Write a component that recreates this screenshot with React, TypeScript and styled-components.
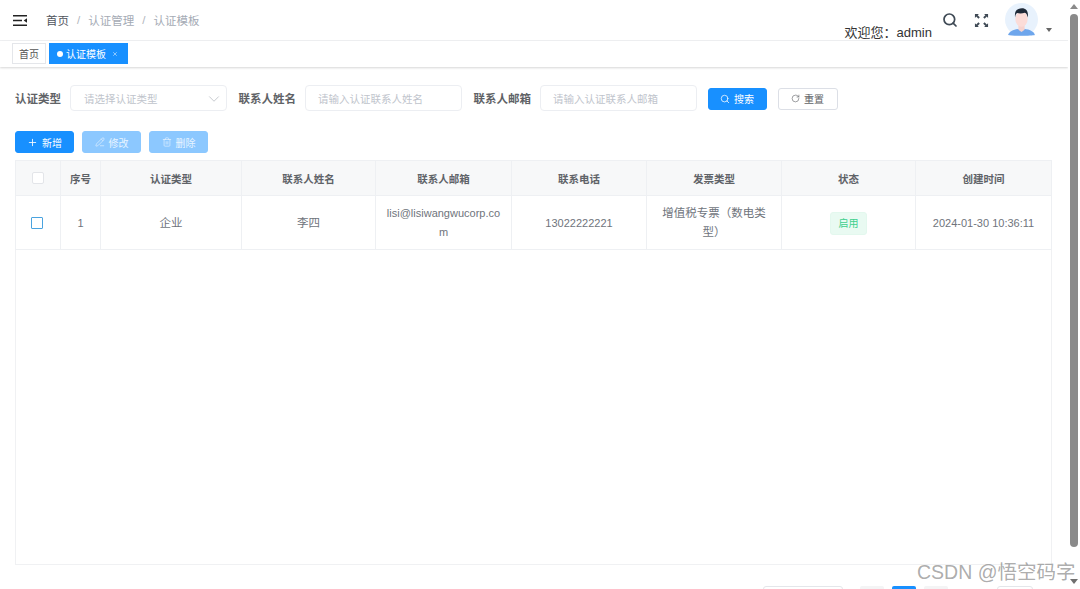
import React from 'react';
import styled, { createGlobalStyle } from 'styled-components';
import { Plus, Search, RotateCw, PencilLine, Trash2, ChevronDown, X } from 'lucide-react';

const GlobalStyle = createGlobalStyle`
  html, body {
    margin: 0;
    padding: 0;
    height: 100%;
    overflow: hidden;
    background: #fff;
    font-family: "Liberation Sans", "Noto Sans CJK SC", sans-serif;
  }
  * { box-sizing: border-box; }
`;

const columns = [45, 40, 141, 134, 136, 135, 135, 134, 136];
const headers = ['序号', '认证类型', '联系人姓名', '联系人邮箱', '联系电话', '发票类型', '状态', '创建时间'];

const App: React.FC = () => {
  return (
    <Page>
      <GlobalStyle />
      <Main>
        <Navbar>
          <FoldIcon viewBox="0 0 14 11">
            <path d="M0 .8h14M0 5.500h9M0 10.200h14" stroke="#222" strokeWidth="1.6" />
            <path d="M14 3.200v4.600L10.600 5.500z" fill="#222" />
          </FoldIcon>
          <Crumbs>
            <CrumbRoot>首页</CrumbRoot>
            <Slash>/</Slash>
            <span>认证管理</span>
            <Slash>/</Slash>
            <span>认证模板</span>
          </Crumbs>
          <RightMenu>
            <Welcome>欢迎您：admin</Welcome>
            <SearchIcon size={16} strokeWidth={2.6} />
            <FullIcon viewBox="0 0 16 16">
              <path
                d="M1 1h4.200L3.900 2.300l2.300 2.300-1.500 1.500-2.300-2.300L1 5.200zM15 1v4.200l-1.400-1.400-2.300 2.300-1.500-1.500 2.300-2.300L10.800 1zM1 15v-4.200l1.400 1.400 2.300-2.300 1.500 1.500-2.300 2.300L5.200 15zM15 15h-4.200l1.300-1.300-2.300-2.300 1.500-1.500 2.300 2.300 1.400-1.400z"
                fill="#3f4a55"
              />
            </FullIcon>
            <Avatar viewBox="0 0 32 32">
              <circle cx="16" cy="16" r="16" fill="#e8f2fd" />
              <path d="M3 31c1-4 7-6 13-6s12 2 13 6c-3 1-23 1-26 0z" fill="#6ea6ec" />
              <path d="M13 21h6v5l-3 2-3-2z" fill="#f6d3cf" />
              <ellipse cx="16" cy="15.500" rx="6" ry="7.500" fill="#fbdcd8" />
              <path d="M9.800 14c-1-6 2-9 6.700-9 4 0 6.400 2.700 5.700 9-.7-2.500-1.500-4-3-4.500-2.500.8-5.500.8-7.500.2-1.200.8-1.700 2.300-1.900 4.300z" fill="#1f2a38" />
            </Avatar>
            <Caret />
          </RightMenu>
        </Navbar>
        <TagsBar>
          <Tag>首页</Tag>
          <Tag $active>
            <Dot />
            认证模板
            <CloseIcon size={6} strokeWidth={2} />
          </Tag>
        </TagsBar>
        <Content>
          <SearchForm>
            <FieldLabel>认证类型</FieldLabel>
            <Select>
              请选择认证类型
              <SelectArrow size={18} strokeWidth={1} />
            </Select>
            <FieldLabel>联系人姓名</FieldLabel>
            <Input>请输入认证联系人姓名</Input>
            <FieldLabel>联系人邮箱</FieldLabel>
            <Input>请输入认证联系人邮箱</Input>
            <ActionButton $kind="primary" $width={59}>
              <Search size={10} strokeWidth={1.8} />
              搜索
            </ActionButton>
            <ActionButton $kind="plain" $width={60}>
              <RotateCw size={9} strokeWidth={1.6} />
              重置
            </ActionButton>
          </SearchForm>
          <Toolbar>
            <ActionButton $kind="primary" $width={59}>
              <Plus size={11} strokeWidth={1.8} />
              新增
            </ActionButton>
            <ActionButton $kind="disabled" $width={59}>
              <PencilLine size={10} strokeWidth={1.5} />
              修改
            </ActionButton>
            <ActionButton $kind="disabled" $width={59}>
              <Trash2 size={10} strokeWidth={1.5} />
              删除
            </ActionButton>
          </Toolbar>
          <TableWrap>
            <Table>
              <colgroup>
                {columns.map((w, i) => (
                  <col key={i} style={{ width: w }} />
                ))}
              </colgroup>
              <thead>
                <tr>
                  <HeadCell>
                    <HeadCheck />
                  </HeadCell>
                  {headers.map((h) => (
                    <HeadCell key={h}>{h}</HeadCell>
                  ))}
                </tr>
              </thead>
              <tbody>
                <tr>
                  <BodyCell>
                    <RowCheck />
                  </BodyCell>
                  <BodyCell $latin>1</BodyCell>
                  <BodyCell>企业</BodyCell>
                  <BodyCell>李四</BodyCell>
                  <BodyCell $latin>lisi@lisiwangwucorp.com</BodyCell>
                  <BodyCell $latin>13022222221</BodyCell>
                  <BodyCell>增值税专票（数电类型）</BodyCell>
                  <BodyCell>
                    <StatusTag>启用</StatusTag>
                  </BodyCell>
                  <BodyCell $latin>2024-01-30 10:36:11</BodyCell>
                </tr>
              </tbody>
            </Table>
          </TableWrap>
          <Pagination>
            <PageSize />
            <PageButton />
            <PageButton $active />
            <PageButton />
            <GoTo />
          </Pagination>
        </Content>
      </Main>
      <Scrollbar>
        <ArrowUp />
        <Thumb />
        <ArrowDown />
      </Scrollbar>
      <Watermark>CSDN @悟空码字</Watermark>
    </Page>
  );
};

const Page = styled.div`
  position: relative;
  display: flex;
  width: 1080px;
  height: 589px;
  overflow: hidden;
  background: #fff;
`;

const Main = styled.div`
  width: 1068px;
  flex: none;
  display: flex;
  flex-direction: column;
`;

const Navbar = styled.div`
  height: 41px;
  flex: none;
  display: flex;
  align-items: center;
  padding: 0 16px 0 13px;
  border-bottom: 1px solid #f0f1f3;
`;

const FoldIcon = styled.svg`
  width: 14px;
  height: 11px;
  flex: none;
  margin-right: 19px;
`;

const Crumbs = styled.div`
  display: flex;
  align-items: center;
  font-size: 11.5px;
  color: #a5abb5;
`;

const CrumbRoot = styled.span`
  color: #50555c;
`;

const Slash = styled.span`
  margin: 0 8px;
  color: #b0b4bb;
`;

const RightMenu = styled.div`
  margin-left: auto;
  display: flex;
  align-items: flex-start;
  height: 41px;
  padding-top: 3px;
`;

const Welcome = styled.span`
  margin: 21px 10px 0 0;
  font-size: 13px;
  line-height: 18px;
  color: #333;
  white-space: nowrap;
`;

const SearchIcon = styled(Search)`
  margin: 9px 16px 0 0;
  color: #3f4a55;
`;

const FullIcon = styled.svg`
  width: 15px;
  height: 15px;
  margin: 10px 16px 0 0;
`;

const Avatar = styled.svg`
  width: 33px;
  height: 33px;
  flex: none;
`;

const Caret = styled.span`
  margin: 25px 0 0 8px;
  border-left: 3px solid transparent;
  border-right: 3px solid transparent;
  border-top: 4px solid #666;
`;

const TagsBar = styled.div`
  height: 26px;
  flex: none;
  display: flex;
  align-items: flex-start;
  gap: 3px;
  padding: 2px 0 0 12px;
  background: #fff;
  box-shadow: 0 1px 2px rgba(0, 0, 0, 0.16);
`;

const Tag = styled.div<{ $active?: boolean }>`
  height: 21px;
  display: flex;
  align-items: center;
  padding: ${(p) => (p.$active ? '0 9px 0 7px' : '0 6px')};
  font-size: 10px;
  border: 1px solid ${(p) => (p.$active ? '#1890ff' : '#e4e6ea')};
  background: ${(p) => (p.$active ? '#1890ff' : '#fff')};
  color: ${(p) => (p.$active ? '#fff' : '#555')};
`;

const Dot = styled.span`
  width: 6px;
  height: 6px;
  margin-right: 3px;
  border-radius: 50%;
  background: #fff;
`;

const CloseIcon = styled(X)`
  margin: 1px 0 0 6px;
`;

const Content = styled.div`
  flex: 1;
  display: flex;
  flex-direction: column;
  padding: 18px 16px 0 15px;
`;

const SearchForm = styled.div`
  height: 26px;
  flex: none;
  display: flex;
  align-items: center;
`;

const FieldLabel = styled.label`
  font-size: 11.5px;
  font-weight: 700;
  color: #606266;
  margin-right: 9px;
  white-space: nowrap;
`;

const Select = styled.div`
  width: 157px;
  height: 26px;
  flex: none;
  display: flex;
  align-items: center;
  justify-content: space-between;
  margin-right: 11.5px;
  padding: 0 3px 0 13px;
  font-size: 10.5px;
  color: #c0c4cc;
  border: 1px solid #eceef2;
  border-radius: 4px;
`;

const SelectArrow = styled(ChevronDown)`
  margin-top: 2px;
  color: #b4b8bf;
`;

const Input = styled.div`
  width: 157px;
  height: 26px;
  flex: none;
  display: flex;
  align-items: center;
  margin-right: 11.5px;
  padding: 0 12px;
  font-size: 10.5px;
  color: #c0c4cc;
  border: 1px solid #eceef2;
  border-radius: 4px;
`;

const buttonColors = {
  primary: 'background: #1890ff; color: #fff; border-color: #1890ff;',
  disabled: 'background: #8cc8ff; color: #e8f4ff; border-color: #8cc8ff;',
  plain: 'background: #fff; color: #606266; border-color: #dcdfe6;',
};

const ActionButton = styled.button<{ $kind: keyof typeof buttonColors; $width: number }>`
  width: ${(p) => p.$width}px;
  height: 22px;
  flex: none;
  display: flex;
  align-items: center;
  justify-content: center;
  gap: 4px;
  padding: 0;
  font-family: inherit;
  font-size: 10px;
  border: 1px solid;
  border-radius: 3px;
  ${(p) => buttonColors[p.$kind]}

  ${SearchForm} & {
    margin: 1px 12px 0 -1px;
  }
`;

const Toolbar = styled.div`
  height: 22px;
  flex: none;
  display: flex;
  gap: 8px;
  margin-top: 20px;
`;

const TableWrap = styled.div`
  width: 1037px;
  height: 405px;
  flex: none;
  margin-top: 7px;
  border: 1px solid #f0f1f3;
`;

const Table = styled.table`
  width: 1036px;
  table-layout: fixed;
  border-collapse: collapse;
  margin: -1px 0 0 -1px;
`;

const HeadCell = styled.th`
  height: 35px;
  padding: 0;
  font-size: 10.5px;
  font-weight: 700;
  color: #5f6368;
  background: #f7f8f9;
  border: 1px solid #eef0f3;
  text-align: center;
`;

const BodyCell = styled.td<{ $latin?: boolean }>`
  height: 54px;
  padding: 1px 10px 0;
  font-size: ${(p) => (p.$latin ? '11px' : '11.5px')};
  line-height: 19px;
  color: #6f747c;
  border: 1px solid #eef0f3;
  text-align: center;
  word-break: break-all;
`;

const HeadCheck = styled.span`
  display: block;
  width: 12px;
  height: 12px;
  margin: 0 auto;
  background: #fff;
  border: 1px solid #e3e5e9;
  border-radius: 2px;
`;

const RowCheck = styled.span`
  display: block;
  width: 12px;
  height: 12px;
  margin: 0 0 0 5px;
  background: #fff;
  border: 1.5px solid #4aa3df;
  border-radius: 1px;
`;

const StatusTag = styled.span`
  display: inline-block;
  width: 37px;
  height: 23px;
  font-size: 10px;
  line-height: 21px;
  color: #3ecf8e;
  background: #e9faf2;
  border: 1px solid #e3f8ee;
  border-radius: 3px;
`;

const Pagination = styled.div`
  display: flex;
  margin-top: 21px;
  padding-left: 748px;
  gap: 8px;
`;

const PageSize = styled.div`
  width: 80px;
  height: 22px;
  margin-right: 9px;
  border: 1px solid #e4e6ea;
  border-radius: 3px;
`;

const PageButton = styled.div<{ $active?: boolean }>`
  width: 24px;
  height: 22px;
  border-radius: 2px;
  background: ${(p) => (p.$active ? '#1890ff' : '#f4f4f5')};
`;

const GoTo = styled.div`
  width: 36px;
  height: 22px;
  margin-left: 41px;
  border: 1px solid #e4e6ea;
  border-radius: 3px;
`;

const Scrollbar = styled.div`
  width: 12px;
  flex: none;
  display: flex;
  flex-direction: column;
  align-items: center;
  background: #fff;
`;

const ArrowUp = styled.span`
  margin-top: 4px;
  border-left: 4px solid transparent;
  border-right: 4px solid transparent;
  border-bottom: 5px solid #8a8a8a;
`;

const Thumb = styled.span`
  width: 8px;
  height: 533px;
  margin-top: 5px;
  border-radius: 4px;
  background: #8a8a8a;
`;

const ArrowDown = styled.span`
  margin-top: 32px;
  border-left: 4px solid transparent;
  border-right: 4px solid transparent;
  border-top: 5px solid #6f6f6f;
`;

const Watermark = styled.div`
  position: absolute;
  left: 917px;
  top: 560px;
  font-size: 19.5px;
  line-height: 24px;
  color: rgba(120, 120, 120, 0.62);
  white-space: nowrap;
`;

export default App;
